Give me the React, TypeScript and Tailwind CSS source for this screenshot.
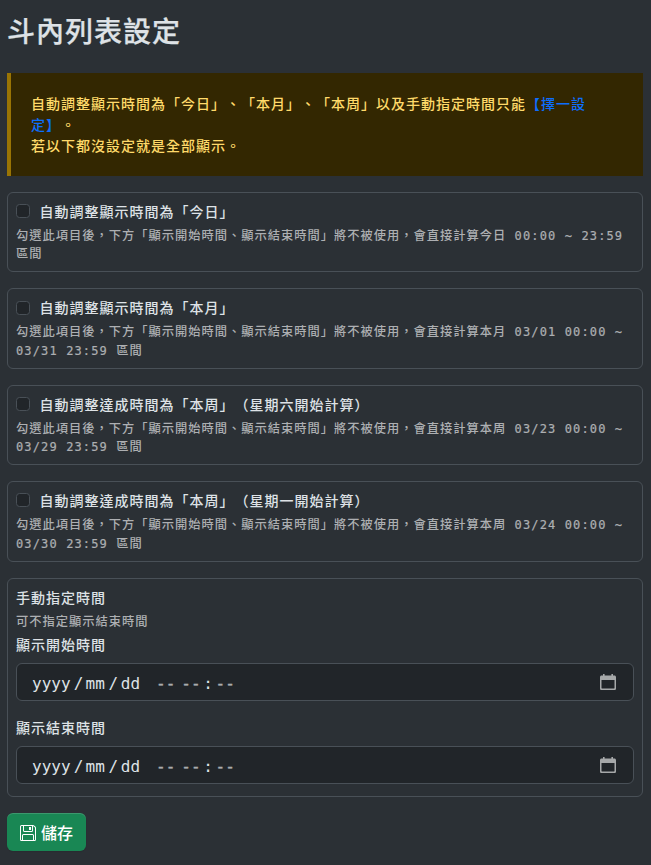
import React from "react";
import { BsFloppy } from "react-icons/bs";

const ranges = [
  {
    label: "自動調整顯示時間為「今日」",
    period: "今日",
    first: " 00:00 ~ 23:59",
    second: "",
  },
  {
    label: "自動調整顯示時間為「本月」",
    period: "本月",
    first: " 03/01 00:00 ~",
    second: "03/31 23:59 ",
  },
  {
    label: "自動調整達成時間為「本周」（星期六開始計算）",
    period: "本周",
    first: " 03/23 00:00 ~",
    second: "03/29 23:59 ",
  },
  {
    label: "自動調整達成時間為「本周」（星期一開始計算）",
    period: "本周",
    first: " 03/24 00:00 ~",
    second: "03/30 23:59 ",
  },
];

function Mono({ children }: { children: React.ReactNode }) {
  return (
    <span className="font-['DejaVu_Sans_Mono',monospace] text-[12px] tracking-[1.13px] whitespace-pre leading-none [-webkit-text-stroke:0.2px_#adafb2]">
      {children}
    </span>
  );
}

function RangeCard({ label, period, first, second }: (typeof ranges)[number]) {
  return (
    <div className="mb-4 h-[80.375px] rounded-md border border-[#495057] p-2">
      <label className="flex h-[21px] items-center">
        <input
          type="checkbox"
          className="mb-[0.5px] h-3.5 w-3.5 shrink-0 appearance-none rounded-[3.5px] border border-[#495057] bg-[#212529]"
        />
        <span className="ml-[9.5px] whitespace-nowrap leading-[21px]">{label}</span>
      </label>
      <p className="mt-1 whitespace-nowrap text-[12.25px] leading-[18.375px] text-[#adafb2]">
        勾選此項目後，下方「顯示開始時間、顯示結束時間」將不被使用，會直接計算{period}
        <Mono>{first}</Mono>
        <br />
        <Mono>{second}</Mono>區間
      </p>
    </div>
  );
}

function CalendarIcon() {
  return (
    <svg width="16" height="16" viewBox="0 0 16 16" fill="none">
      <path
        d="M3 0h1.6v1.6h6.8V0H13v1.6h1.4c.9 0 1.6.7 1.6 1.6v11.2c0 .9-.7 1.6-1.6 1.6H1.6C.7 16 0 15.300 0 14.400V3.200c0-.9.7-1.600 1.600-1.600H3zM1.500 6v8c0 .3.2.5.5.5h12c.3 0 .5-.2.5-.5V6z"
        fill="#a6a8a9"
        fillRule="evenodd"
      />
    </svg>
  );
}

function DateField() {
  return (
    <div className="flex h-[38px] items-center rounded-md border border-[#495057] bg-[#212529] pr-[17px] pl-[15px] font-['DejaVu_Sans_Mono',monospace] text-base tracking-normal text-[#dee2e6]">
      <div className="flex pt-[5px]">
        <span>yyyy</span>
        <span className="w-[15px] pl-px text-center">/</span>
        <span>mm</span>
        <span className="w-[16px] pl-px text-center">/</span>
        <span>dd</span>
        <span className="ml-[16px] [-webkit-text-stroke:0.3px_#a9abad] text-[#a9abad]">--</span>
        <span className="ml-[6px] [-webkit-text-stroke:0.3px_#a9abad] text-[#a9abad]">--</span>
        <span className="w-[15px] text-center">:</span>
        <span className="[-webkit-text-stroke:0.3px_#a9abad] text-[#a9abad]">--</span>
      </div>
      <span className="ml-auto">
        <CalendarIcon />
      </span>
    </div>
  );
}

export default function App() {
  return (
    <main className="h-[865px] w-[651px] overflow-hidden bg-[#2b3035] pt-[13px] pr-2 pl-[7px] font-['Noto_Sans_CJK_TC',sans-serif] text-sm font-medium tracking-[1px] text-[#dee2e6] [text-spacing-trim:space-all]">
      <h2 className="mb-[26px] h-[34px] text-[28px] leading-[34px] [-webkit-text-stroke:0.25px_#dee2e6]">斗內列表設定</h2>
      <div className="mb-4 h-[103px] border-l-4 border-[#997404] bg-[#332701] p-5 leading-[21px] whitespace-nowrap text-[#ffda6a]">
        自動調整顯示時間為「今日」、「本月」、「本周」以及手動指定時間只能
        <span className="text-[#0d6efd]">
          【擇一設
          <br />
          定】
        </span>
        。<br />
        若以下都沒設定就是全部顯示。
      </div>
      {ranges.map((range) => (
        <RangeCard key={range.label} {...range} />
      ))}
      <section className="mb-4 h-[219px] rounded-md border border-[#495057] p-2">
        <h3 className="leading-[21px]">手動指定時間</h3>
        <p className="mt-1 h-[18px] text-[12.25px] leading-[18.375px] text-[#adafb2]">可不指定顯示結束時間</p>
        <div className="mt-1">
          <h3 className="mb-2 leading-[21px]">顯示開始時間</h3>
          <DateField />
        </div>
        <div className="mt-4">
          <h3 className="mb-2 leading-[21px]">顯示結束時間</h3>
          <DateField />
        </div>
      </section>
      <button className="flex h-[38px] w-[79px] items-center rounded-md bg-[#198754] pl-[13px] text-base font-medium tracking-normal text-white shadow-[inset_0_1px_0_rgba(255,255,255,0.15),0_1px_1px_rgba(0,0,0,0.075)]">
        <BsFloppy size={16} className="mt-0.5" />
        <span className="ml-[5px]">儲存</span>
      </button>
    </main>
  );
}
